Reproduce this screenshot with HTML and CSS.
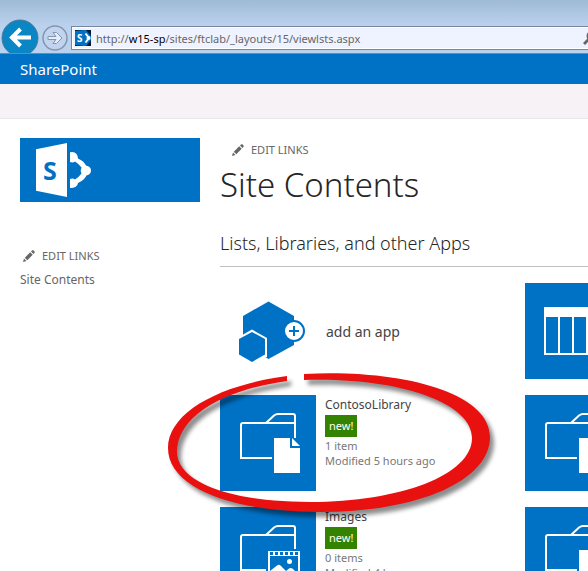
FILE: index.html
```html
<!DOCTYPE html>
<html lang="en">
<head>
<meta charset="utf-8">
<meta name="viewport" content="width=device-width, initial-scale=1">
<title>Site Contents</title>
<link rel="stylesheet" href="styles.css">
</head>
<body>
<svg class="defs" aria-hidden="true">
  <symbol id="pencil" viewBox="0 0 12 12">
    <path d="M0 12 1 8.500 3.500 11zM1.800 7.700 7.200 2.300 9.700 4.800 4.300 10.200zM8 1.500 9.300.300Q10 0 10.700.600L11.500 1.400Q12 2 11.600 2.700L10.500 4z" fill="#666"/>
  </symbol>
  <symbol id="folder" viewBox="0 0 96 96">
    <path d="M52 63H21V30Q21 28 23 28H75M46 28 54 20.500Q56 19 58 19H73Q75 19 75 21V43" fill="none" stroke="#fff" stroke-width="2"/>
  </symbol>
  <symbol id="library" viewBox="0 0 96 96">
    <use href="#folder"/>
    <path d="M54 43H70V53H80V78H54zM72 43 80 51H72z" fill="#fff"/>
  </symbol>
  <symbol id="pictures" viewBox="0 0 96 96">
    <use href="#folder"/>
    <path d="M46 42H82V84H46z" fill="#0072c6"/>
    <path d="M48 44H80V82H48z" fill="#fff"/>
    <path d="M50 49H78V80H50z" fill="#0072c6"/>
    <path d="M50 45h3v3h-3zM55 45h3v3h-3zM60 45h3v3h-3zM65 45h3v3h-3zM70 45h3v3h-3zM75 45h3v3h-3z" fill="#0072c6"/>
    <circle cx="69.500" cy="54.500" r="2.500" fill="#fff"/>
    <path d="M50 64 57 58.500Q59 57 61 59L66 64 69 61.500Q71 60.500 73 62L78 67V80H50z" fill="#fff"/>
  </symbol>
  <symbol id="list" viewBox="0 0 96 96">
    <path d="M19 24H77V72H19z" fill="#fff"/>
    <path d="M21 34h12v36H21zM35 34h12v36H35zM49 34h12v36H49zM63 34h12v36H63z" fill="#0072c6"/>
  </symbol>
</svg>

<header>
  <div class="browser">
    <button class="back" aria-label="Back">
      <svg viewBox="0 0 38 38"><circle cx="19" cy="19" r="18" fill="#0a86c4" stroke="#4b7898"/><path d="M30 18.500H11M19.500 10 11 18.500 19.500 27" fill="none" stroke="#fff" stroke-width="4"/></svg>
    </button>
    <button class="forward" aria-label="Forward">
      <svg viewBox="0 0 26 26"><circle cx="13" cy="13" r="12" fill="#c1d3ee" stroke="#8496ad" stroke-width="1.500"/><path d="M6 11.500H14L11 7.500H14.500L20 13 14.500 18.500H11L14 14.500H6z" fill="#e4edfa" stroke="#8496ad"/></svg>
    </button>
    <div class="address">
      <svg class="favicon" viewBox="0 0 16 16" aria-hidden="true"><path d="M0 0H16V16H0z" fill="#06192d"/><path d="M0 1 9 0H11L16 6V10L11 16H9L0 15z" fill="#0072c6"/><text x="2" y="12" class="favicon-letter">S</text><path d="M10.500 3.500 14 8 10.500 12.500" fill="none" stroke="#fff" stroke-width="2"/><circle cx="13.500" cy="8" r="2" fill="#fff"/></svg>
      <div class="url" role="textbox" contenteditable="true" spellcheck="false" aria-label="Address">http://<b>w15-sp</b>/sites/ftclab/_layouts/15/viewlsts.aspx</div>
      <button class="search" aria-label="Search"><svg viewBox="0 0 16 16"><path d="M1 14 6 9" stroke="#666" stroke-width="3"/><circle cx="9" cy="6" r="4.500" fill="none" stroke="#666" stroke-width="2"/></svg></button>
    </div>
  </div>
  <div class="suite">SharePoint</div>
  <div class="ribbon"></div>
</header>

<div class="page">
  <nav class="side">
    <a class="logo" href="#" aria-label="SharePoint home">
      <svg viewBox="0 0 180 64"><path d="M16 11.300 47 5V59L16 52.700z" fill="#fff"/><text x="23" y="42" class="logo-letter">S</text><path d="M50 14.300Q54 13 56.500 16 58 18 58 20.500 64 23 66 27.500 71 28.500 71 32.500 71 36.500 66.500 37.500 64 42.500 58 45 57.500 50 50 50V41Q53 40 55 41.500 59 39 61.500 35.500 60 32.500 61.500 29.500 59 26 55 23.500 53 25 50 24z" fill="#fff"/></svg>
    </a>
    <a class="edit" href="#"><svg><use href="#pencil"/></svg>EDIT LINKS</a>
    <a class="nav-link" href="#">Site Contents</a>
  </nav>

  <main>
    <a class="edit" href="#"><svg><use href="#pencil"/></svg>EDIT LINKS</a>
    <h1>Site Contents</h1>
    <h2>Lists, Libraries, and other Apps</h2>
    <div class="apps">
      <a class="app add" href="#">
        <svg class="tile plain" viewBox="0 0 96 96"><path d="M48.500 18.500 74 33V62L48.500 76 23 62V33z" fill="#0072c6"/><path d="M32 46.500 47 55V74L32 81 17 73V55z" fill="#fff"/><path d="M32 49 45 56V71.500L32 79 19 71.500V56z" fill="#0072c6"/><circle cx="74" cy="48" r="10" fill="#fff" stroke="#0072c6" stroke-width="2"/><path d="M69 48H79M74 43V53" stroke="#0072c6" stroke-width="2"/></svg>
        <span class="add-label">add an app</span>
      </a>
      <a class="app" href="#" aria-label="List"><svg class="tile"><use href="#list"/></svg></a>

      <div class="app marked">
        <svg class="tile"><use href="#library"/></svg>
        <div class="info"><a class="name" href="#">ContosoLibrary</a><span class="new">new!</span><span>1 item</span><span>Modified 5 hours ago</span></div>
        <svg class="ring" viewBox="160 365 340 160" aria-hidden="true"><path d="M287 376C218 385 168 413 168 448C168 487 230 512 320 512C420 512 490 480 490 437C490 392 400 369 304 374V380C400 377 472 403 472 438C472 475 400 502 310 502C230 502 177 482 177 452C177 420 215 391 287 381z" fill="#e8110f"/></svg>
      </div>
      <a class="app" href="#" aria-label="Library"><svg class="tile"><use href="#library"/></svg></a>

      <div class="app">
        <svg class="tile"><use href="#pictures"/></svg>
        <div class="info"><a class="name" href="#">Images</a><span class="new">new!</span><span>0 items</span><span>Modified 4 hours ago</span></div>
      </div>
      <a class="app" href="#" aria-label="Library"><svg class="tile"><use href="#library"/></svg></a>
    </div>
  </main>
</div>
</body>
</html>
```
FILE: styles.css
```css
* { box-sizing: border-box; }

body {
  margin: 0;
  height: 100vh;
  overflow: hidden;
  background: #fff;
  color: #666;
  font: 12px/15px "Noto Sans", "Open Sans", sans-serif;
}

a { color: inherit; text-decoration: none; }
button { padding: 0; border: 0; background: none; }
svg { display: block; }
.defs { position: absolute; width: 0; height: 0; }

.browser {
  display: flex;
  height: 54px;
  padding: 19px 0 0 1px;
  overflow: hidden;
  background: linear-gradient(#9fbad5, #bbd2ef 26px);
  border-bottom: 1px solid #6a8bb0;
}
.back { flex: none; width: 38px; height: 38px; }
.forward { flex: none; width: 26px; height: 26px; margin: 6px 6px 0 3px; }
.address {
  flex: 1;
  display: flex;
  align-items: center;
  height: 24px;
  margin: 7px -12px 0 -3px;
  padding-left: 3px;
  border: 1px solid #76869c;
  background: #eff3ff;
  box-shadow: inset 0 0 0 1px #fff;
}
.favicon { width: 16px; height: 16px; }
.favicon-letter { font: bold 10px "Open Sans", sans-serif; fill: #fff; }
.url {
  flex: 1;
  padding-left: 5px;
  font-size: 11px;
  white-space: nowrap;
  outline: 0;
}
.url b { color: #000; font-weight: 400; }
.search, .search svg { width: 16px; height: 16px; }

.suite {
  height: 30px;
  padding-left: 20px;
  background: #0072c6;
  color: #fff;
  font-size: 15px;
  line-height: 31px;
}
.ribbon { height: 35px; background: #f6f2f6; border-bottom: 1px solid #e8e6e8; }

.page { display: flex; padding: 19px 0 0 20px; }
.side { flex: none; width: 180px; margin-right: 20px; }
.logo { display: block; background: #0072c6; }
.logo-letter { font: bold 25px "Open Sans", sans-serif; fill: #0072c6; }
.edit { display: flex; align-items: center; padding-left: 3px; font-size: 11px; }
.edit svg { width: 12px; height: 12px; margin-right: 7px; }
.side .edit { margin-top: 46px; }
.nav-link { display: block; margin-top: 9px; }

main { flex: 1; min-width: 0; }
main .edit { margin-top: 4px; padding-left: 12px; }
h1 {
  margin: 4px 0 0;
  color: #262626;
  font-size: 33px;
  font-weight: 300;
  line-height: 48px;
}
h2 {
  margin: 21px 0 16px;
  padding-bottom: 10px;
  border-bottom: 1px solid #c0c0c0;
  color: #262626;
  font-size: 18px;
  font-weight: 300;
  line-height: 26px;
}
.apps { display: grid; grid-template-columns: 305px 305px; row-gap: 16px; }
.app { display: flex; }
.tile { flex: none; width: 96px; height: 96px; background: #0072c6; }
.plain { background: none; }
.add-label { align-self: center; margin-left: 10px; color: #444; font-size: 14px; }
.info {
  display: flex;
  flex-direction: column;
  align-items: flex-start;
  margin-left: 9px;
  padding-top: 2px;
  color: #777;
  font-size: 11px;
}
.name { margin-bottom: 3px; color: #444; font-size: 12px; }
.new {
  margin-bottom: 1px;
  padding: 0 4px;
  background: #338200;
  color: #fff;
  line-height: 22px;
}
.marked { position: relative; }
.ring {
  position: absolute;
  z-index: 1;
  top: -30px;
  left: -60px;
  width: 340px;
  height: 160px;
  overflow: visible;
  pointer-events: none;
  filter: drop-shadow(4px 5px 2px rgba(0, 0, 0, .45));
}
```
